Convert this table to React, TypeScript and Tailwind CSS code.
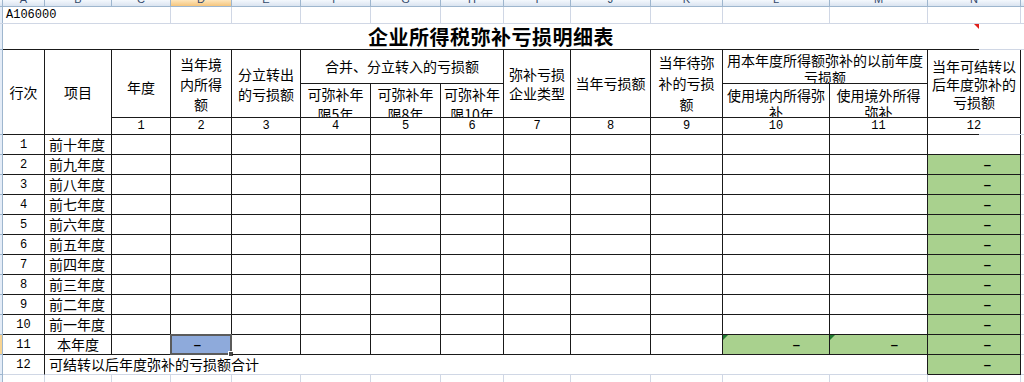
import React from 'react';

const widths = [
  'w-[42px]', 'w-[67px]', 'w-[59px]', 'w-[61px]', 'w-[69px]', 'w-[70px]', 'w-[70px]',
  'w-[63px]', 'w-[67px]', 'w-[80px]', 'w-[72px]', 'w-[107px]', 'w-[98px]', 'w-[93px]',
];
const letters = ['A', 'B', 'C', 'D', 'E', 'F', 'G', 'H', 'I', 'J', 'K', 'L', 'M', 'N'];

const rows = ['前十年度', '前九年度', '前八年度', '前七年度', '前六年度', '前五年度', '前四年度', '前三年度', '前二年度', '前一年度', '本年度'];

const Strip = ({ className = '' }: { className?: string }) => (
  <div className={`w-[3px] shrink-0 border-r border-b border-[#9eb6ce] bg-[#e4ecf7] ${className}`} />
);

const Dash = () => (
  <span className="font-['Liberation_Sans',sans-serif] text-[13px] font-bold leading-none">–</span>
);

const Hd = ({ className = '', children }: { className?: string; children: React.ReactNode }) => (
  <div className={`flex justify-center overflow-hidden border-r border-b border-[#1a1a1a] text-center ${className}`}>
    {children}
  </div>
);

const Num = ({ className = '', n }: { className?: string; n: number }) => (
  <div className={`row-start-3 flex items-center justify-center border-r border-b border-[#1a1a1a] font-['Liberation_Mono',monospace] text-[12px] ${className}`}>
    {n}
  </div>
);

export default function App() {
  return (
    <div className="w-[1024px] h-[382px] overflow-hidden bg-white text-[14px] text-black font-['Noto_Sans_CJK_SC',sans-serif]">
      {/* column letters, cut off at the top */}
      <div className="flex h-[7px] overflow-hidden border-b border-[#9eb6ce] bg-linear-to-b from-[#f4f8fd] to-[#dae4f0]">
        <div className="w-[3px] shrink-0 border-r border-[#9eb6ce]" />
        {letters.map((l, i) => (
          <div
            key={l}
            className={`${widths[i]} shrink-0 flex justify-center border-r border-[#9eb6ce] ${
              l === 'D' ? 'bg-linear-to-b from-[#fde6bd] to-[#f5c57c]' : ''
            }`}
          >
            <span className="-mt-[8px] font-['Liberation_Sans',sans-serif] text-[11px] leading-[14px] text-[#33496b]">{l}</span>
          </div>
        ))}
        <div className="flex-1" />
      </div>

      {/* row 1 */}
      <div className="flex h-[17px] border-b border-[#d0d7e5]">
        <Strip className="border-b-0" />
        <div className="w-[168px] shrink-0 border-r border-[#d0d7e5] pl-[3px] font-['Liberation_Mono',monospace] text-[12px] leading-[17px]">
          A106000
        </div>
        {widths.slice(3).map((w, i) => (
          <div key={i} className={`${w} shrink-0 border-r border-[#d0d7e5]`} />
        ))}
      </div>

      {/* title */}
      <div className="flex h-[26px]">
        <Strip />
        <div className="relative w-[976px] shrink-0 border-b border-[#1a1a1a] pt-[1px] text-center text-[20px] font-bold leading-[24px] tracking-[0.5px]">
          企业所得税弥补亏损明细表
          <div className="absolute right-[0px] top-0 h-0 w-0 border-t-[5px] border-l-[5px] border-t-[#e0201b] border-l-transparent" />
        </div>
        <div className="flex-1 border-b border-[#d0d7e5]" />
      </div>

      {/* header */}
      <div className="flex h-[85px]">
        <Strip />
        <div className="grid w-[976px] shrink-0 grid-cols-[42px_67px_59px_61px_69px_70px_70px_63px_67px_80px_72px_107px_98px_93px] grid-rows-[34px_34px_17px]">
          <Hd className="col-start-1 row-start-1 row-span-3 items-center">行次</Hd>
          <Hd className="col-start-2 row-start-1 row-span-3 items-center">项目</Hd>
          <Hd className="col-start-3 row-start-1 row-span-2 items-center pt-[8px]">年度</Hd>
          <Hd className="col-start-4 row-start-1 row-span-2 items-center leading-[20px]">
            当年境<br />内所得<br />额
          </Hd>
          <Hd className="col-start-5 row-start-1 row-span-2 items-center leading-[20px]">
            分立转出<br />的亏损额
          </Hd>
          <Hd className="col-start-6 col-span-3 row-start-1 items-center">合并、分立转入的亏损额</Hd>
          <Hd className="col-start-6 row-start-2 items-start leading-[20px]">
            <span>可弥补年<br />限5年</span>
          </Hd>
          <Hd className="col-start-7 row-start-2 items-start leading-[20px]">
            <span>可弥补年<br />限8年</span>
          </Hd>
          <Hd className="col-start-8 row-start-2 items-start leading-[20px]">
            <span>可弥补年<br />限10年</span>
          </Hd>
          <Hd className="col-start-9 row-start-1 row-span-2 items-center leading-[19px]">
            弥补亏损<br />企业类型
          </Hd>
          <Hd className="col-start-10 row-start-1 row-span-2 items-center">当年亏损额</Hd>
          <Hd className="col-start-11 row-start-1 row-span-2 items-center leading-[21px]">
            当年待弥<br />补的亏损<br />额
          </Hd>
          <Hd className="col-start-12 col-span-2 row-start-1 items-start pt-[2px] leading-[17px]">
            <span>用本年度所得额弥补的以前年度<br />亏损额</span>
          </Hd>
          <Hd className="col-start-12 row-start-2 items-start pt-[3px] leading-[17px]">
            <span>使用境内所得弥<br />补</span>
          </Hd>
          <Hd className="col-start-13 row-start-2 items-start pt-[3px] leading-[17px]">
            <span>使用境外所得<br />弥补</span>
          </Hd>
          <Hd className="col-start-14 row-start-1 row-span-2 items-center leading-[18px]">
            当年可结转以<br />后年度弥补的<br />亏损额
          </Hd>
          <Num className="col-start-3" n={1} />
          <Num className="col-start-4" n={2} />
          <Num className="col-start-5" n={3} />
          <Num className="col-start-6" n={4} />
          <Num className="col-start-7" n={5} />
          <Num className="col-start-8" n={6} />
          <Num className="col-start-9" n={7} />
          <Num className="col-start-10" n={8} />
          <Num className="col-start-11" n={9} />
          <Num className="col-start-12" n={10} />
          <Num className="col-start-13" n={11} />
          <Num className="col-start-14" n={12} />
        </div>
        <div className="flex-1 border-b border-[#d0d7e5]" />
      </div>

      {/* data rows */}
      {rows.map((label, r) => {
        const n = r + 1;
        const current = n === 11;
        return (
          <div key={n} className="flex h-[20px]">
            <Strip className={current ? 'bg-[#f8d492]' : ''} />
            {widths.map((w, c) => {
              let cls = `${w} shrink-0 relative flex items-center border-r border-b border-[#1a1a1a]`;
              let content: React.ReactNode = null;
              if (c === 0) {
                cls += ' justify-center font-["Liberation_Mono",monospace] text-[12px]';
                content = n;
              } else if (c === 1) {
                cls += current ? ' justify-center' : ' pl-[4px]';
                content = label;
              } else if (c === 13 && n >= 2) {
                cls += ' bg-[#a9d18e] justify-end pr-[29px]';
                content = <Dash />;
              } else if (current && c === 3) {
                cls += ' bg-[#8eaadb] justify-end pr-[30px]';
                content = (
                  <>
                    <Dash />
                    <div className="absolute -inset-[1px] border-2 border-[#5b5b5b]" />
                    <div className="absolute -bottom-[3px] -right-[3px] h-[6px] w-[6px] border border-white bg-[#4a4a4a]" />
                  </>
                );
              } else if (current && (c === 11 || c === 12)) {
                cls += ' bg-[#a9d18e] justify-end pr-[29px]';
                content = (
                  <>
                    <div className="absolute left-0 top-0 h-0 w-0 border-t-[5px] border-r-[5px] border-t-[#207a32] border-r-transparent" />
                    <Dash />
                  </>
                );
              }
              return (
                <div key={c} className={cls}>
                  {content}
                </div>
              );
            })}
            <div className="flex-1 border-b border-[#d0d7e5]" />
          </div>
        );
      })}

      {/* row 12 */}
      <div className="flex h-[20px]">
        <Strip />
        <div className="w-[42px] shrink-0 flex items-center justify-center border-r border-b border-r-[#1a1a1a] border-b-[#d0d7e5] font-['Liberation_Mono',monospace] text-[12px]">
          12
        </div>
        <div className="w-[883px] shrink-0 flex items-center border-r border-b border-r-[#1a1a1a] border-b-[#d0d7e5] pl-[4px]">
          可结转以后年度弥补的亏损额合计
        </div>
        <div className="w-[93px] shrink-0 flex items-center justify-end border-r border-b border-[#1a1a1a] bg-[#a9d18e] pr-[29px]">
          <Dash />
        </div>
        <div className="flex-1 border-b border-[#d0d7e5]" />
      </div>

      {/* row 13 */}
      <div className="flex h-[7px]">
        <div className="w-[3px] shrink-0 border-r border-[#9eb6ce] bg-[#e4ecf7]" />
        {widths.map((w, i) => (
          <div key={i} className={`${w} shrink-0 border-r border-[#d0d7e5]`} />
        ))}
        <div className="flex-1" />
      </div>
    </div>
  );
}
